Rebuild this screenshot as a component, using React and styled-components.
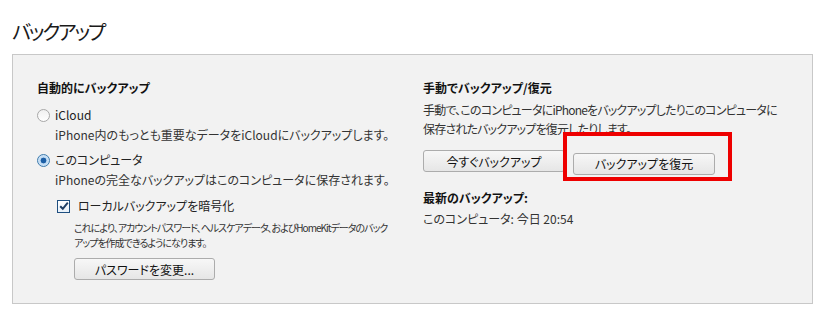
import React from 'react';
import styled, { createGlobalStyle } from 'styled-components';

const GlobalStyle = createGlobalStyle`
    html, body {
        margin: 0;
        padding: 0;
        background: #ffffff;
    }
    body {
        font-family: "Noto Sans CJK JP", "Noto Sans", sans-serif;
        font-feature-settings: "palt";
        color: #222;
    }
`

const Page = styled.div`
    width: 835px;
    height: 319px;
    padding: 20px 22px 0 12px;
    box-sizing: border-box;
`

const Title = styled.h1`
    margin: 0 0 11px 0;
    font-size: 20px;
    font-weight: normal;
    line-height: 23px;
    letter-spacing: -2.2px;
    color: #1a1a1a;
`

const Panel = styled.div`
    border: 1px solid #c8c8c8;
    background: #f2f2f2;
    height: 250px;
    box-sizing: border-box;
    padding: 24px 0 0 24px;
    display: grid;
    grid-template-columns: 386px 1fr;
`

const Column = styled.div`
    display: flex;
    flex-direction: column;
    align-items: flex-start;
`

const Heading = styled.div`
    font-size: 12px;
    font-weight: bold;
    line-height: 18px;
    color: #111;
    margin-top: ${p => p.$top || 0}px;
`

const Text = styled.div`
    font-size: 12px;
    line-height: ${p => p.$lh || 19}px;
    letter-spacing: ${p => p.$tight || 0}px;
    color: #333;
    margin-left: ${p => p.$indent || 0}px;
    margin-top: ${p => p.$top || 0}px;
    white-space: nowrap;
`

const Small = styled.div`
    font-size: 10px;
    line-height: 15px;
    letter-spacing: -1px;
    color: #333;
    margin-left: 37px;
    margin-top: 4px;
    white-space: nowrap;
`

const OptionRow = styled.label`
    display: flex;
    align-items: center;
    gap: 5px;
    font-size: 12px;
    line-height: 20px;
    color: #222;
    margin-top: ${p => p.$top || 0}px;
    margin-left: ${p => p.$indent || 0}px;
`

const Radio = styled.span`
    width: 11px;
    height: 11px;
    border-radius: 50%;
    border: 1px solid ${p => (p.$checked ? '#3d7bad' : '#a8a8a8')};
    background: ${p => (p.$checked
        ? 'radial-gradient(circle, #1d5fa6 0 2.6px, #bcd9f3 3.2px, #e3effa 100%)'
        : 'linear-gradient(#f0f0f0, #ffffff)')};
    display: inline-block;
`

const Checkbox = styled.span`
    width: 11px;
    height: 11px;
    border: 1px solid #1f4f80;
    background: linear-gradient(#ffffff, #e8f1fa);
    display: inline-flex;
    align-items: center;
    justify-content: center;
    margin-right: 3px;
`

const Button = styled.button`
    font-family: inherit;
    font-feature-settings: "palt";
    font-size: 12px;
    color: #111;
    width: ${p => p.$w || 142}px;
    height: 22px;
    padding: 0;
    border: 1px solid #acacac;
    border-radius: 3px;
    background: linear-gradient(#f7f7f7, #e6e6e6);
    margin-top: ${p => p.$top || 0}px;
    margin-left: ${p => p.$indent || 0}px;
`

const ButtonRow = styled.div`
    display: flex;
    gap: 8px;
    margin-top: 12px;
`

const Marked = styled.div`
    position: relative;
`

const Highlight = styled.div`
    position: absolute;
    left: -10px;
    top: -18px;
    width: 161px;
    height: 41px;
    border: 4px solid #ee0000;
    pointer-events: none;
`

function App() {
    return <>
        <GlobalStyle />
        <Page>
            <Title>バックアップ</Title>
            <Panel>
                <Column>
                    <Heading>自動的にバックアップ</Heading>
                    <OptionRow $top={8}>
                        <Radio />
                        iCloud
                    </OptionRow>
                    <Text $indent={18}>iPhone内のもっとも重要なデータをiCloudにバックアップします。</Text>
                    <OptionRow $top={6}>
                        <Radio $checked />
                        このコンピュータ
                    </OptionRow>
                    <Text $indent={18}>iPhoneの完全なバックアップはこのコンピュータに保存されます。</Text>
                    <OptionRow $top={7} $indent={20}>
                        <Checkbox>
                            <svg width="10" height="10" viewBox="0 0 10 10">
                                <path d="M1.2 5.2 L3.8 7.8 L8.8 1.6" fill="none" stroke="#1f3e64" strokeWidth="2" />
                            </svg>
                        </Checkbox>
                        ローカルバックアップを暗号化
                    </OptionRow>
                    <Small>
                        これにより、アカウントパスワード、ヘルスケアデータ、およびHomeKitデータのバック<br />
                        アップを作成できるようになります。
                    </Small>
                    <Button $top={8} $indent={37} $w={141}>パスワードを変更...</Button>
                </Column>
                <Column>
                    <Heading>手動でバックアップ/復元</Heading>
                    <Text $lh={19} $top={3} $tight={-0.8}>
                        手動で、このコンピュータにiPhoneをバックアップしたりこのコンピュータに<br />
                        保存されたバックアップを復元したりします。
                    </Text>
                    <ButtonRow>
                        <Button>今すぐバックアップ</Button>
                        <Marked>
                            <Button>バックアップを復元</Button>
                            <Highlight />
                        </Marked>
                    </ButtonRow>
                    <Heading $top={14}>最新のバックアップ:</Heading>
                    <Text $lh={24}>このコンピュータ: 今日 20:54</Text>
                </Column>
            </Panel>
        </Page>
    </>;
}

export default App;
